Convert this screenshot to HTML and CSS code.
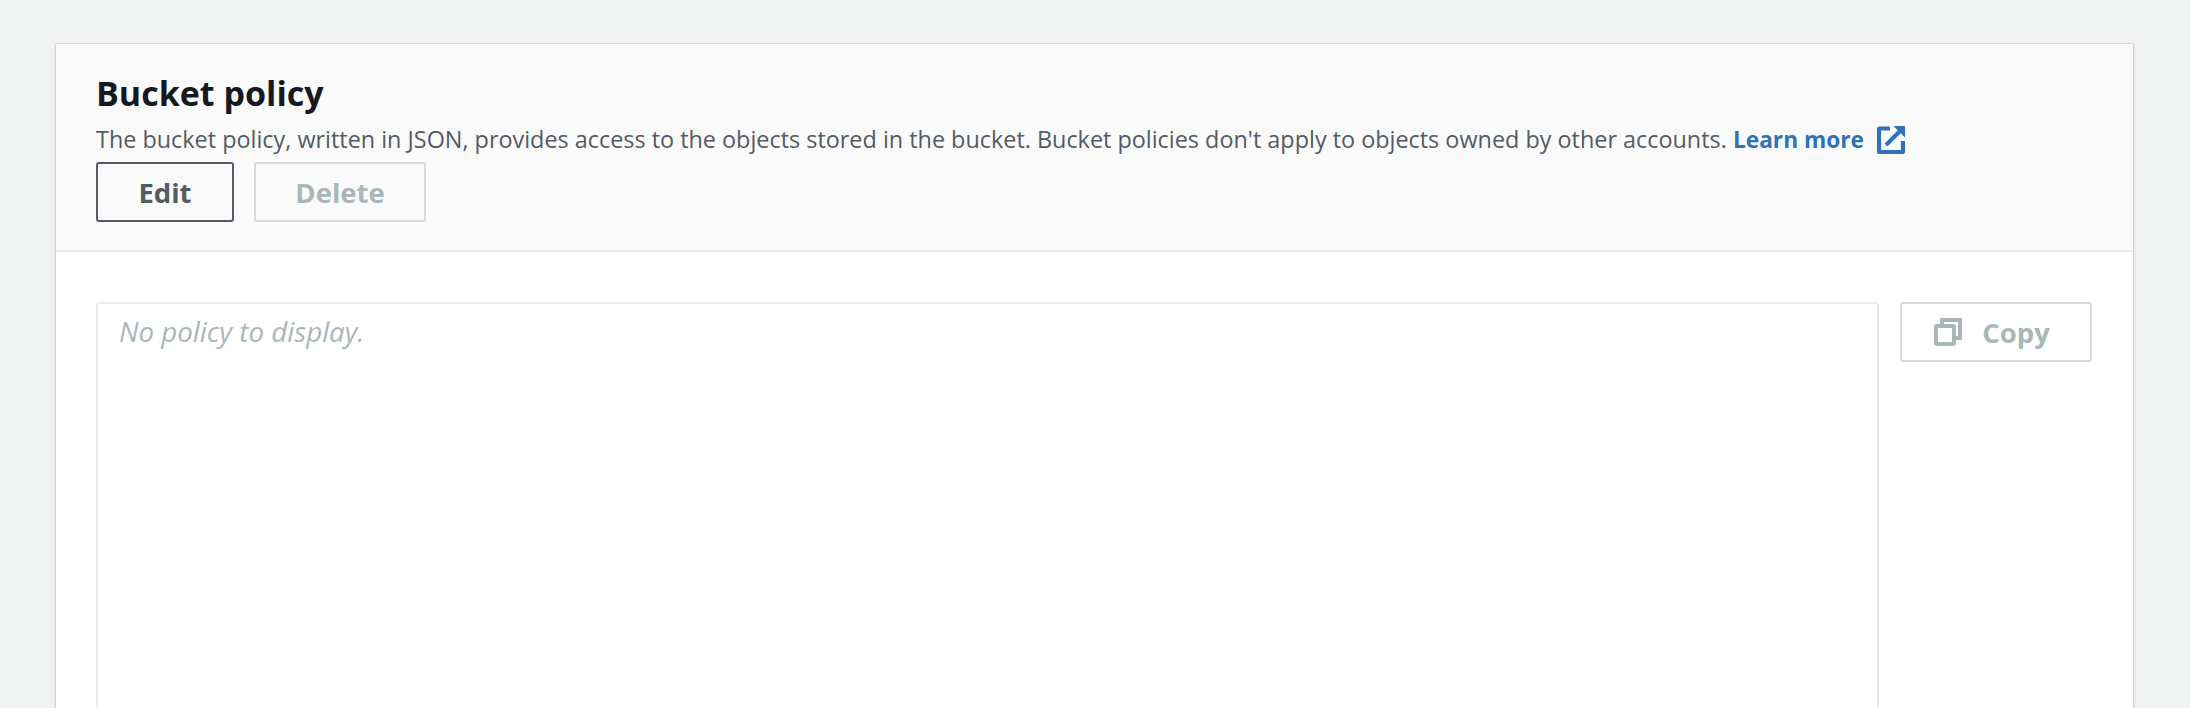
FILE: index.html
```html
<!DOCTYPE html>
<html lang="en">
<head>
<meta charset="utf-8">
<title>Bucket policy</title>
<link rel="stylesheet" href="styles.css">
</head>
<body>
<main class="page">
  <section class="card">
    <header class="card-header">
      <h2 class="title">Bucket policy</h2>
      <p class="desc">The bucket policy, written in JSON, provides access to the objects stored in the bucket. Bucket policies don't apply to objects owned by other accounts. <a class="learn" href="#">Learn more<svg class="ext-icon" viewBox="0 0 28 28" aria-hidden="true"><path d="M13 2.500H2.500a.5.5 0 0 0-.5.500V25.500a.5.5 0 0 0 .5.500H25.500a.5.5 0 0 0 .5-.5V15" fill="none" stroke="currentColor" stroke-width="4.200"/><path d="M9 19 22.500 5.500" fill="none" stroke="currentColor" stroke-width="4"/><path d="M16.500 0H28V11.500Z" fill="currentColor"/></svg></a></p>
      <div class="actions">
        <button class="btn btn-edit" type="button">Edit</button>
        <button class="btn btn-disabled" type="button">Delete</button>
      </div>
    </header>
    <div class="card-body">
      <div class="policy"><span class="empty">No policy to display.</span></div>
      <button class="btn btn-disabled btn-copy" type="button"><svg class="copy-icon" viewBox="0 0 28 28" aria-hidden="true"><rect x="2" y="8" width="18" height="18" rx="1" fill="none" stroke="currentColor" stroke-width="4"/><path d="M8 6V2h18v18h-4" fill="none" stroke="currentColor" stroke-width="4"/></svg>Copy</button>
    </div>
  </section>
</main>
</body>
</html>
```
FILE: styles.css
```css
html, body {
  margin: 0;
  height: 708px;
  overflow: hidden;
  background: #f2f3f3;
  font-family: "Open Sans", sans-serif;
}
.page {
  padding: 44px 57px 0 56px;
}
.card {
  background: #fff;
  box-shadow: -1px 0 2px rgba(0, 28, 36, .2), 1px 0 2px rgba(0, 28, 36, .2);
  height: 800px;
}
.card-header {
  box-sizing: border-box;
  background: #fafafa;
  border-bottom: 2px solid #eaeded;
  padding: 24px 41px 0 40px;
  height: 208px;
}
.title {
  margin: 0;
  font-size: 34px;
  line-height: 50px;
  font-weight: 700;
  color: #16191f;
}
.desc {
  margin: 4px 0 0;
  font-size: 23.400px;
  line-height: 34px;
  color: #545b64;
}
.learn {
  color: #2e73b8;
  font-size: 22.700px;
  font-weight: 700;
  text-decoration: none;
}
.ext-icon {
  width: 28px;
  height: 28px;
  margin-left: 13px;
  vertical-align: -6px;
}
.actions {
  display: flex;
  gap: 20px;
  margin-top: 5px;
}
.btn {
  box-sizing: border-box;
  height: 60px;
  border-radius: 3px;
  background: transparent;
  font-family: "Open Sans", sans-serif;
  font-size: 27.500px;
  font-weight: 700;
  padding: 0;
}
.btn-edit {
  width: 138px;
  border: 2px solid #545b64;
  color: #545b64;
}
.btn-disabled {
  width: 172px;
  border: 2px solid #d5dbdb;
  color: #aab7b8;
}
.card-body {
  display: flex;
  gap: 21px;
  align-items: flex-start;
  padding: 50px 41px 0 40px;
}
.policy {
  flex: 1;
  box-sizing: border-box;
  height: 500px;
  border: 2px solid #eaeded;
  border-radius: 3px;
  padding: 11px 21px;
}
.empty {
  font-style: italic;
  font-size: 27.700px;
  line-height: 32px;
  color: #aab7b8;
}
.btn-copy {
  width: 192px;
  background: #fff;
  display: flex;
  align-items: center;
  justify-content: center;
  gap: 20px;
  padding-right: 8px;
}
.copy-icon {
  width: 28px;
  height: 28px;
}
```
